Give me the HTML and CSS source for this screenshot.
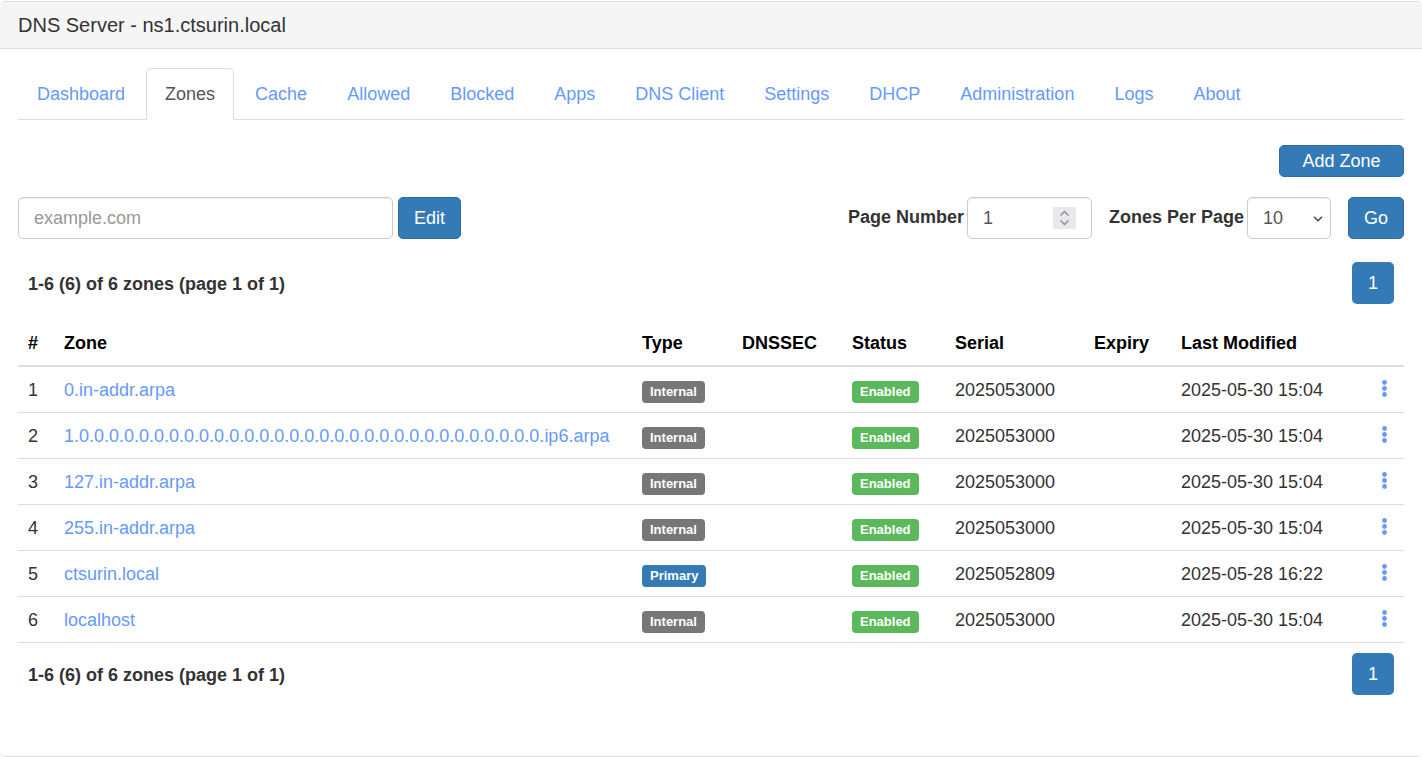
FILE: index.html
```html
<!DOCTYPE html>
<html lang="en">
<head>
<meta charset="utf-8">
<meta name="viewport" content="width=device-width, initial-scale=1">
<title>DNS Server - ns1.ctsurin.local</title>
<link rel="stylesheet" href="styles.css">
</head>
<body>
<svg width="0" height="0" class="sprite" aria-hidden="true">
  <symbol id="dots" viewBox="0 0 6 18"><circle cx="2.5" cy="2.5" r="2.4"/><circle cx="2.5" cy="8.5" r="2.4"/><circle cx="2.5" cy="14.5" r="2.4"/></symbol>
</svg>
<main class="panel">
  <h1 class="panel-heading">DNS Server - ns1.ctsurin.local</h1>
  <div class="panel-body">
    <nav class="tabs">
      <a class="tab" href="#">Dashboard</a>
      <a class="tab active" href="#" aria-current="page">Zones</a>
      <a class="tab" href="#">Cache</a>
      <a class="tab" href="#">Allowed</a>
      <a class="tab" href="#">Blocked</a>
      <a class="tab" href="#">Apps</a>
      <a class="tab" href="#">DNS Client</a>
      <a class="tab" href="#">Settings</a>
      <a class="tab" href="#">DHCP</a>
      <a class="tab" href="#">Administration</a>
      <a class="tab" href="#">Logs</a>
      <a class="tab" href="#">About</a>
    </nav>
    <div class="actions"><button type="button" class="btn btn-add">Add Zone</button></div>
    <div class="filters">
      <form class="edit-form">
        <input type="text" class="control zone-input" placeholder="example.com" aria-label="Zone name">
        <button type="button" class="btn">Edit</button>
      </form>
      <form class="page-form">
        <div class="field">
          <label for="page-number">Page Number</label>
          <div class="control number-box">
            <input type="number" id="page-number" class="number-input" value="1">
            <svg class="spinner" viewBox="0 0 23 22" aria-hidden="true"><rect width="23" height="22" fill="#e9e9ed"/><path d="M7.5 8.5l4-4 4 4M7.5 13.5l4 4 4-4" fill="none" stroke="#8f8f9d" stroke-width="1.5"/></svg>
          </div>
        </div>
        <div class="field">
          <label for="per-page">Zones Per Page</label>
          <div class="select-box">
            <select id="per-page" class="control select"><option>10</option><option>25</option><option>50</option></select>
            <svg class="chevron" viewBox="0 0 10 6" aria-hidden="true"><path d="M1 .8l4 4 4-4" fill="none" stroke="#444" stroke-width="1.5"/></svg>
          </div>
        </div>
        <button type="button" class="btn">Go</button>
      </form>
    </div>
    <div class="summary">
      <strong>1-6 (6) of 6 zones (page 1 of 1)</strong>
      <a class="page-link" href="#">1</a>
    </div>
    <table class="zones">
      <colgroup><col class="c-num"><col><col class="c-type"><col class="c-dnssec"><col class="c-status"><col class="c-serial"><col class="c-expiry"><col class="c-modified"><col class="c-menu"></colgroup>
      <thead>
        <tr><th>#</th><th>Zone</th><th>Type</th><th>DNSSEC</th><th>Status</th><th>Serial</th><th>Expiry</th><th>Last Modified</th><th></th></tr>
      </thead>
      <tbody>
        <tr><td>1</td><td><a href="#">0.in-addr.arpa</a></td><td><span class="label">Internal</span></td><td></td><td><span class="label enabled">Enabled</span></td><td>2025053000</td><td></td><td>2025-05-30 15:04</td><td><button type="button" class="menu" aria-label="Zone menu"><svg><use href="#dots"/></svg></button></td></tr>
        <tr><td>2</td><td><a href="#">1.0.0.0.0.0.0.0.0.0.0.0.0.0.0.0.0.0.0.0.0.0.0.0.0.0.0.0.0.0.0.0.ip6.arpa</a></td><td><span class="label">Internal</span></td><td></td><td><span class="label enabled">Enabled</span></td><td>2025053000</td><td></td><td>2025-05-30 15:04</td><td><button type="button" class="menu" aria-label="Zone menu"><svg><use href="#dots"/></svg></button></td></tr>
        <tr><td>3</td><td><a href="#">127.in-addr.arpa</a></td><td><span class="label">Internal</span></td><td></td><td><span class="label enabled">Enabled</span></td><td>2025053000</td><td></td><td>2025-05-30 15:04</td><td><button type="button" class="menu" aria-label="Zone menu"><svg><use href="#dots"/></svg></button></td></tr>
        <tr><td>4</td><td><a href="#">255.in-addr.arpa</a></td><td><span class="label">Internal</span></td><td></td><td><span class="label enabled">Enabled</span></td><td>2025053000</td><td></td><td>2025-05-30 15:04</td><td><button type="button" class="menu" aria-label="Zone menu"><svg><use href="#dots"/></svg></button></td></tr>
        <tr><td>5</td><td><a href="#">ctsurin.local</a></td><td><span class="label primary">Primary</span></td><td></td><td><span class="label enabled">Enabled</span></td><td>2025052809</td><td></td><td>2025-05-28 16:22</td><td><button type="button" class="menu" aria-label="Zone menu"><svg><use href="#dots"/></svg></button></td></tr>
        <tr><td>6</td><td><a href="#">localhost</a></td><td><span class="label">Internal</span></td><td></td><td><span class="label enabled">Enabled</span></td><td>2025053000</td><td></td><td>2025-05-30 15:04</td><td><button type="button" class="menu" aria-label="Zone menu"><svg><use href="#dots"/></svg></button></td></tr>
      </tbody>
    </table>
    <div class="summary summary-bottom">
      <strong>1-6 (6) of 6 zones (page 1 of 1)</strong>
      <a class="page-link" href="#">1</a>
    </div>
  </div>
</main>
</body>
</html>
```
FILE: styles.css
```css
* { box-sizing: border-box; }

body {
  margin: 0;
  padding-top: 1px;
  background: #fff;
  color: #333;
  font: 18px/25px "Liberation Sans", Arial, sans-serif;
}

a { color: #6699ff; text-decoration: none; }
input, select, button { font: inherit; }
.sprite { position: absolute; }

.panel {
  min-height: calc(100vh - 1px);
  border: solid #ddd;
  border-width: 1px 0;
  border-radius: 5px;
}

.panel-heading {
  margin: 0;
  padding: 11px 18px;
  border-bottom: 1px solid #ddd;
  border-radius: 4px 4px 0 0;
  background: #f5f5f5;
  font-size: 20px;
  font-weight: 400;
  line-height: 24px;
}

.panel-body { padding: 19px 18px; }

.tabs {
  display: flex;
  gap: 2px;
  border-bottom: 1px solid #ddd;
}

.tab {
  margin-bottom: -1px;
  padding: 13px 18px 12px;
  border: 1px solid transparent;
  border-radius: 5px 5px 0 0;
  white-space: nowrap;
}

.tab.active {
  border-color: #ddd #ddd #fff;
  background: #fff;
  color: #555;
}

.actions { display: flex; justify-content: flex-end; padding: 25px 0 20px; }

.btn {
  height: 42px;
  padding: 0 15px;
  border: 1px solid #2e6da4;
  border-radius: 5px;
  background: #337ab7;
  color: #fff;
}

.btn-add { width: 125px; height: 32px; }

.filters { display: flex; justify-content: space-between; gap: 16px; }
.edit-form { display: flex; gap: 5px; }
.page-form { display: flex; gap: 17px; }
.field { display: flex; gap: 3px; }
.field label { padding-top: 8px; font-weight: 700; white-space: nowrap; }

.control {
  height: 42px;
  padding: 0 15px;
  border: 1px solid #ccc;
  border-radius: 5px;
  background: #fff;
  box-shadow: inset 0 1px 1px rgba(0, 0, 0, .075);
  color: #555;
}

.zone-input { width: 375px; }
.zone-input::placeholder { color: #999; }

.number-box { display: flex; align-items: center; justify-content: space-between; width: 125px; }

.number-input {
  width: 60px;
  padding: 0;
  border: 0;
  background: none;
  color: inherit;
  appearance: textfield;
}

.spinner { width: 23px; height: 22px; }
.select-box { position: relative; }
.select { width: 84px; appearance: none; }

.chevron {
  position: absolute;
  top: 19px;
  right: 8px;
  width: 10px;
  height: 6px;
  pointer-events: none;
}

.summary {
  display: flex;
  align-items: center;
  justify-content: space-between;
  padding: 23px 10px 16px;
}

.summary strong { padding-top: 2px; }
.summary-bottom { padding-top: 10px; }

.page-link {
  width: 42px;
  padding: 9px 0 8px;
  border-radius: 5px;
  background: #337ab7;
  color: #fff;
  text-align: center;
}

.zones { width: 100%; border-collapse: collapse; table-layout: fixed; }

.zones th,
.zones td {
  height: 46px;
  padding: 11px 10px 9px;
  border-bottom: 1px solid #ddd;
  text-align: left;
  vertical-align: top;
  white-space: nowrap;
}

.zones th { border-bottom-width: 2px; color: #000; }

.c-num { width: 36px; }
.c-type { width: 100px; }
.c-dnssec { width: 110px; }
.c-status { width: 103px; }
.c-serial { width: 139px; }
.c-expiry { width: 87px; }
.c-modified { width: 194px; }
.c-menu { width: 39px; }

.label {
  display: inline-block;
  padding: 0 8px;
  border-radius: 4px;
  background: #777;
  color: #fff;
  font-size: 13px;
  font-weight: 700;
  line-height: 22px;
}

.label.primary { background: #337ab7; }
.label.enabled { background: #5cb85c; }

.menu {
  display: flex;
  justify-content: center;
  width: 19px;
  padding: 2px 0;
  border: 0;
  background: none;
  color: #6699ff;
}

.menu svg { width: 6px; height: 18px; fill: currentColor; }
```
